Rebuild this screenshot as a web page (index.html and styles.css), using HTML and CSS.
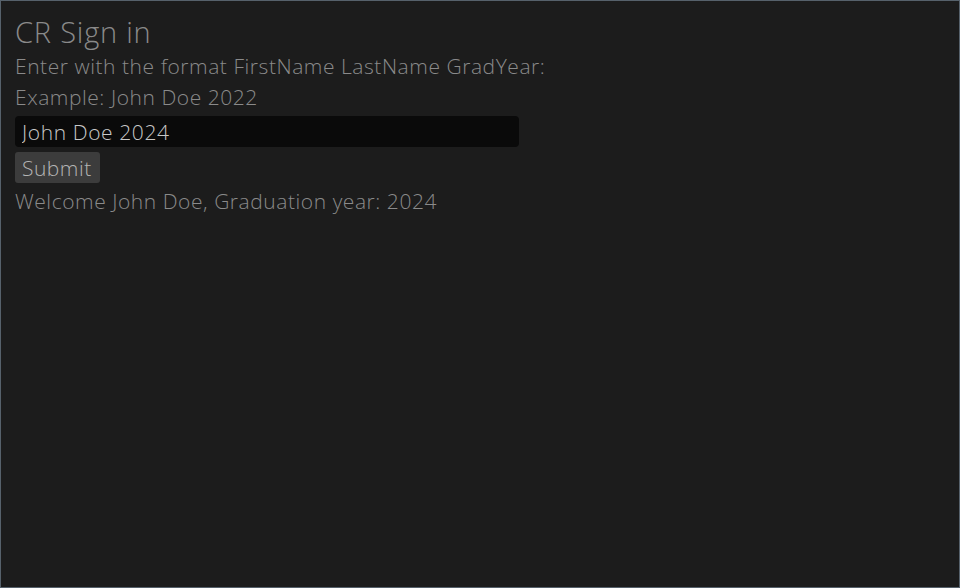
FILE: index.html
```html
<!DOCTYPE html>
<html>
<head>
<meta charset="utf-8">
<link rel="stylesheet" href="styles.css">
</head>
<body>
<div class="app">
  <h1 class="title">CR Sign in</h1>
  <p class="line">Enter with the format FirstName LastName GradYear:</p>
  <p class="line">Example: John Doe 2022</p>
  <input class="field" type="text" value="John Doe 2024">
  <button class="btn">Submit</button>
  <p class="line">Welcome John Doe, Graduation year: 2024</p>
</div>
</body>
</html>
```
FILE: styles.css
```css
html, body {
  margin: 0;
  padding: 0;
  background: #1c1c1c;
}
.app {
  box-sizing: border-box;
  width: 960px;
  height: 588px;
  border: 1px solid #56616b;
  background: #1c1c1c;
  padding: 12px 14px;
  display: flex;
  flex-direction: column;
  align-items: flex-start;
  font-family: "Open Sans", sans-serif;
  font-weight: 300;
  color: #8a8a8a;
}
.title {
  margin: 0;
  font-size: 29px;
  font-weight: 300;
  line-height: 38px;
  letter-spacing: 0.8px;
}
.line {
  margin: 0;
  font-size: 21px;
  line-height: 31px;
  letter-spacing: 0.55px;
}
.field {
  box-sizing: border-box;
  margin: 3px 0 0 0;
  width: 504px;
  height: 31px;
  background: #0a0a0a;
  border: none;
  border-radius: 4px;
  padding: 0 7px;
  color: #c8c8c8;
  font-family: "Open Sans", sans-serif;
  font-weight: 300;
  font-size: 21px;
  letter-spacing: 0.6px;
  outline: none;
}
.btn {
  margin: 5px 0 3px 0;
  height: 31px;
  padding: 0 8px 0 7px;
  background: #3c3c3c;
  border: none;
  border-radius: 3px;
  color: #b4b4b4;
  font-family: "Open Sans", sans-serif;
  font-weight: 300;
  font-size: 21px;
  letter-spacing: 0.5px;
}
```
